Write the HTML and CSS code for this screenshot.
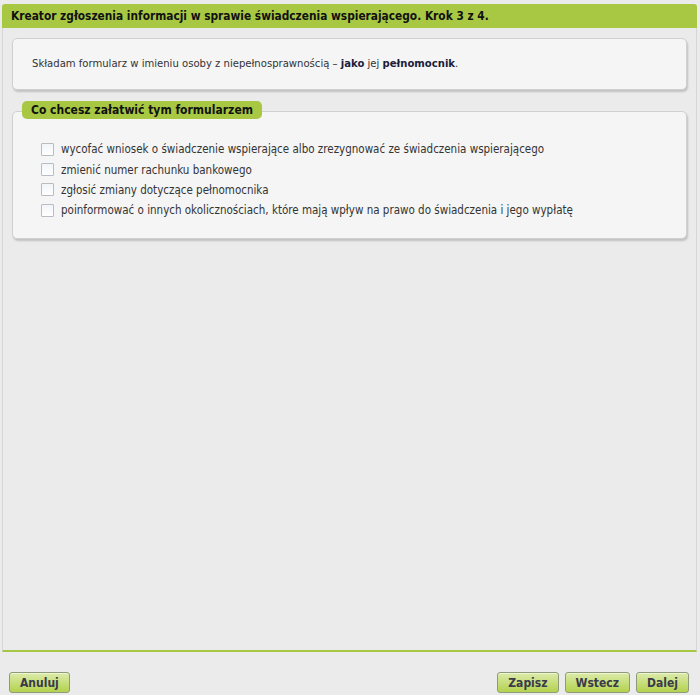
FILE: index.html
```html
<!DOCTYPE html>
<html lang="pl">
<head>
    <meta charset="UTF-8">
    <title>Kreator zgłoszenia</title>
    <link rel="stylesheet" href="styles.css">
</head>
<body>
    <div class="wizard">
        <div class="wizard-header">Kreator zgłoszenia informacji w sprawie świadczenia wspierającego. Krok 3 z 4.</div>
        <div class="wizard-body">
            <div class="card intro">
                Składam formularz w imieniu osoby z niepełnosprawnością – <strong>jako</strong> jej <strong>pełnomocnik</strong>.
            </div>

            <div class="group">
                <div class="group-title">Co chcesz załatwić tym formularzem</div>
                <div class="card options">
                    <label class="option"><input type="checkbox"><span>wycofać wniosek o świadczenie wspierające albo zrezygnować ze świadczenia wspierającego</span></label>
                    <label class="option"><input type="checkbox"><span>zmienić numer rachunku bankowego</span></label>
                    <label class="option"><input type="checkbox"><span>zgłosić zmiany dotyczące pełnomocnika</span></label>
                    <label class="option"><input type="checkbox"><span>poinformować o innych okolicznościach, które mają wpływ na prawo do świadczenia i jego wypłatę</span></label>
                </div>
            </div>
        </div>
    </div>

    <div class="actions">
        <button class="btn">Anuluj</button>
        <div class="actions-right">
            <button class="btn">Zapisz</button>
            <button class="btn">Wstecz</button>
            <button class="btn">Dalej</button>
        </div>
    </div>
</body>
</html>
```

FILE: styles.css
```css
body {
    margin: 0;
    padding: 4px 3px 0 2px;
    background-color: #ebebeb;
    font-family: "DejaVu Sans Condensed", "DejaVu Sans", sans-serif;
    font-size: 11.2px;
    color: #333;
}
.wizard {
    height: 648px;
    box-sizing: border-box;
    border: 1px solid #d6d6d6;
    border-bottom: 2px solid #a6c744;
    border-radius: 4px 4px 0 0;
    display: flex;
    flex-direction: column;
}
.wizard-header {
    background-color: #a8c843;
    color: #111;
    font-weight: bold;
    font-size: 11.8px;
    padding: 5px 10px 5px 9px;
    height: 14px;
    line-height: 14px;
    border-radius: 3px 3px 0 0;
    margin: -1px -1px 0 -1px;
}
.wizard-body {
    padding: 10px 9px 0 9px;
}
.card {
    background-color: #f5f5f5;
    border: 1px solid #d0d0d0;
    border-radius: 5px;
    box-shadow: 1px 2px 2px rgba(0,0,0,0.18);
}
.intro {
    padding: 18px 19px 18px 19px;
    line-height: 14px;
}
.intro strong {
    color: #1c1c3c;
}
.group {
    margin-top: 11px;
}
.group-title {
    display: inline-block;
    position: relative;
    z-index: 1;
    margin-left: 10px;
    background-color: #a8c843;
    color: #111;
    font-weight: bold;
    font-size: 12px;
    padding: 2px 9px;
    height: 14px;
    line-height: 14px;
    border-radius: 5px;
}
.options {
    margin-top: -8px;
    padding: 27px 19px 17px 28px;
    font-size: 11.5px;
}
.option {
    display: flex;
    align-items: center;
    height: 20.4px;
}
.option input {
    appearance: none;
    width: 13px;
    height: 13px;
    margin: 0 7px 0 0;
    border: 1px solid #b8bcc4;
    border-radius: 1px;
    background: linear-gradient(#f2f4f8, #ffffff);
}
.actions {
    display: flex;
    justify-content: space-between;
    padding: 20px 8px 0 7px;
}
.actions-right {
    display: flex;
    gap: 6px;
}
.btn {
    font-family: "DejaVu Sans Condensed", "DejaVu Sans", sans-serif;
    font-weight: bold;
    font-size: 12px;
    color: #3a3a4a;
    height: 21px;
    padding: 0 10px;
    border: 1px solid #8e9a78;
    border-radius: 3px;
    background: linear-gradient(#dcebaa, #b3d24e);
    box-shadow: inset 0 1px 0 rgba(255,255,255,0.5);
}
```
